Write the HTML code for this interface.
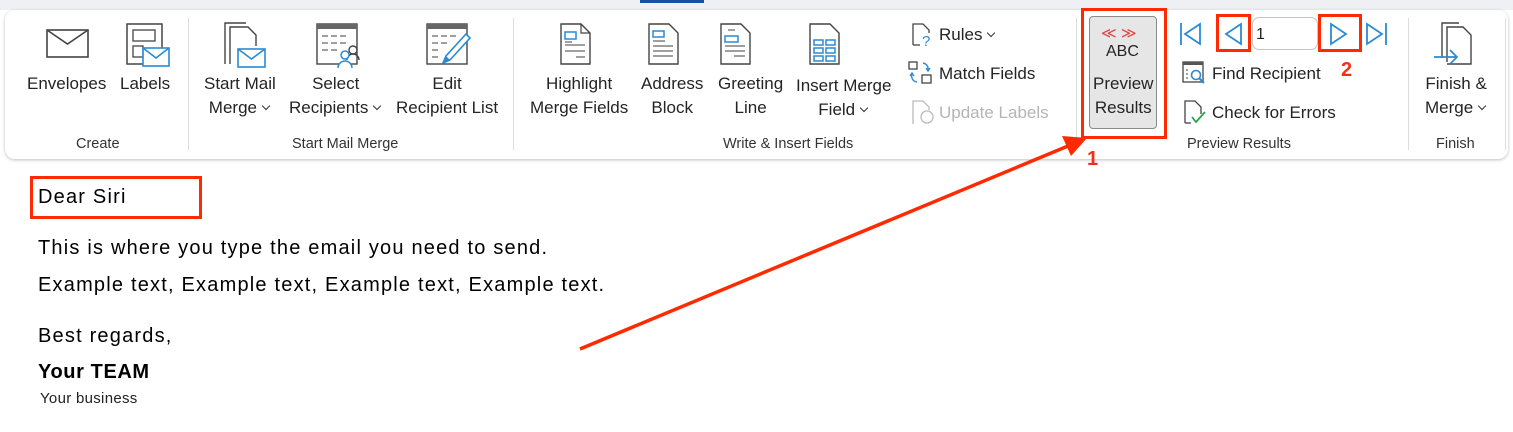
<!DOCTYPE html>
<html><head><meta charset="utf-8"><style>
*{margin:0;padding:0;box-sizing:border-box}
body{width:1513px;height:432px;background:#fff;position:relative;overflow:hidden;font-family:"Liberation Sans",sans-serif;color:#242424}
.t{position:absolute;font-size:17px;white-space:nowrap;line-height:24px;text-align:center}
.g{position:absolute;font-size:14.5px;white-space:nowrap;color:#333}
.sep{position:absolute;top:18px;width:1px;height:132px;background:#dcdcdc}
svg{position:absolute;overflow:visible}
.d{position:absolute;left:38px;font-size:20px;white-space:nowrap;color:#000;letter-spacing:1.2px}
.rb{position:absolute;border:3px solid #ff2a00}
.cv{display:inline-block;width:6px;height:6px;border-right:1.5px solid #333;border-bottom:1.5px solid #333;transform:rotate(45deg);margin:0 2px 5px 6px;vertical-align:middle}
</style></head><body>
<div style="position:absolute;left:0;top:0;width:1513px;height:10px;background:#eef0f4"></div>
<div style="position:absolute;left:640px;top:0;width:64px;height:3px;background:#1a4fa8"></div>
<div style="position:absolute;left:5px;top:10px;width:1503px;height:149px;background:#fff;border-radius:10px;box-shadow:0 1px 3px rgba(0,0,0,.25)"></div>

<!-- Create -->
<svg style="left:46px;top:29px" width="44" height="30"><rect x="1" y="1" width="41" height="27" fill="none" stroke="#444" stroke-width="1.6"/><path d="M1 1 L21.5 15 L42 1" fill="none" stroke="#444" stroke-width="1.6"/></svg>
<svg style="left:126px;top:23px" width="46" height="46"><rect x="1" y="1" width="35" height="40" fill="none" stroke="#444" stroke-width="1.5"/><rect x="7" y="7" width="22" height="11" fill="none" stroke="#444" stroke-width="1.3"/><rect x="7" y="23" width="10" height="11" fill="none" stroke="#444" stroke-width="1.3"/><rect x="17" y="25" width="26" height="18" fill="#fff" stroke="#2a8ad4" stroke-width="1.6"/><path d="M17 25 L30 35 L43 25" fill="none" stroke="#2a8ad4" stroke-width="1.6"/></svg>
<div class="t" style="left:27px;top:72px">Envelopes</div>
<div class="t" style="left:120px;top:72px">Labels</div>
<div class="g" style="left:76px;top:136px">Create</div>
<div class="sep" style="left:188px"></div>

<!-- Start Mail Merge -->
<svg style="left:224px;top:22px" width="46" height="46"><path d="M1 42 V1 H22" fill="none" stroke="#444" stroke-width="1.4"/><path d="M6 42 V5 H24 L32 13 V24" fill="#fff" stroke="#444" stroke-width="1.4"/><rect x="14" y="27" width="27" height="18" fill="#fff" stroke="#2a8ad4" stroke-width="1.6"/><path d="M14 27 L27.5 37 L41 27" fill="none" stroke="#2a8ad4" stroke-width="1.6"/></svg>
<svg style="left:316px;top:23px" width="46" height="46"><rect x="1" y="1" width="40" height="40" fill="#fff" stroke="#444" stroke-width="1.4"/><rect x="1" y="1" width="40" height="5" fill="#666"/><path d="M6 13h6M15 13h6M24 13h6M6 20h6M15 20h6M24 20h6M6 27h6M15 27h6" stroke="#666" stroke-width="1.3"/><circle cx="37" cy="27" r="4" fill="#fff" stroke="#444" stroke-width="1.4"/><path d="M31 37 a6 6 0 0 1 12 0" fill="none" stroke="#444" stroke-width="1.4"/><circle cx="29" cy="32" r="4" fill="#fff" stroke="#2a8ad4" stroke-width="1.5"/><path d="M22 45 a7 7 0 0 1 14 0" fill="#fff" stroke="#2a8ad4" stroke-width="1.5"/></svg>
<svg style="left:426px;top:23px" width="46" height="46"><rect x="1" y="1" width="40" height="40" fill="#fff" stroke="#444" stroke-width="1.4"/><rect x="1" y="1" width="40" height="5" fill="#666"/><path d="M6 13h6M15 13h6M24 13h6M6 20h6M15 20h6M6 27h6M6 34h6" stroke="#666" stroke-width="1.3"/><path d="M40 11 L44 15 L24 37 L17 40 L20 33 Z" fill="#fff" stroke="#2a8ad4" stroke-width="1.6"/><path d="M17 40 L20 33 L24 37Z" fill="#2a8ad4"/></svg>
<div class="t" style="left:204px;top:72px">Start Mail<br>Merge<span class="cv"></span></div>
<div class="t" style="left:289px;top:72px">Select<br>Recipients<span class="cv"></span></div>
<div class="t" style="left:396px;top:72px">Edit<br>Recipient List</div>
<div class="g" style="left:292px;top:136px">Start Mail Merge</div>
<div class="sep" style="left:513px"></div>

<!-- Write & Insert -->
<svg style="left:560px;top:23px" width="32" height="42"><path d="M1 41 V1 H21 L30 10 V41 Z" fill="#fff" stroke="#444" stroke-width="1.4"/><path d="M21 1 V10 H30" fill="none" stroke="#444" stroke-width="1.2"/><rect x="5" y="9" width="11" height="7" fill="none" stroke="#2a8ad4" stroke-width="1.5"/><path d="M5 22h20M5 28h20M16 34h9M5 19h7" stroke="#666" stroke-width="1.2"/></svg>
<svg style="left:648px;top:23px" width="32" height="42"><path d="M1 41 V1 H21 L30 10 V41 Z" fill="#fff" stroke="#444" stroke-width="1.4"/><rect x="5" y="8" width="11" height="6" fill="none" stroke="#2a8ad4" stroke-width="1.5"/><path d="M5 18h12M5 23h20M5 28h20M5 33h20" stroke="#666" stroke-width="1.2"/></svg>
<svg style="left:720px;top:23px" width="32" height="42"><path d="M1 41 V1 H21 L30 10 V41 Z" fill="#fff" stroke="#444" stroke-width="1.4"/><path d="M8 7h7" stroke="#666" stroke-width="1.2"/><rect x="5" y="13" width="13" height="6" fill="none" stroke="#2a8ad4" stroke-width="1.5"/><path d="M5 23h20M5 28h20M14 33h11" stroke="#666" stroke-width="1.2"/></svg>
<svg style="left:809px;top:23px" width="32" height="42"><path d="M1 41 V1 H21 L30 10 V41 Z" fill="#fff" stroke="#444" stroke-width="1.4"/><g fill="none" stroke="#2a8ad4" stroke-width="1.5"><rect x="5" y="17" width="9" height="5"/><rect x="17" y="17" width="9" height="5"/><rect x="5" y="25" width="9" height="5"/><rect x="17" y="25" width="9" height="5"/><rect x="5" y="33" width="9" height="5"/><rect x="17" y="33" width="9" height="5"/></g></svg>
<div class="t" style="left:530px;top:72px">Highlight<br>Merge Fields</div>
<div class="t" style="left:641px;top:72px">Address<br>Block</div>
<div class="t" style="left:718px;top:72px">Greeting<br>Line</div>
<div class="t" style="left:796px;top:74px">Insert Merge<br>Field<span class="cv"></span></div>
<svg style="left:912px;top:23px" width="22" height="24"><path d="M1 22 V1 H11 L17 7 V10" fill="none" stroke="#444" stroke-width="1.3"/><path d="M1 22 H8" stroke="#444" stroke-width="1.3"/><text x="10" y="23" font-size="15" fill="#2a8ad4" font-family="Liberation Sans">?</text></svg>
<div class="t" style="left:939px;top:23px">Rules<span class="cv"></span></div>
<svg style="left:908px;top:61px" width="24" height="24"><rect x="1" y="1" width="8" height="7" fill="none" stroke="#444" stroke-width="1.3"/><rect x="14" y="14" width="9" height="8" fill="none" stroke="#444" stroke-width="1.3"/><path d="M15 2 a6 6 0 0 1 5 7 M18 7 l2 3 l2-3 M9 21 a6 6 0 0 1 -5-8 M2 15 l2-3 l2 3" fill="none" stroke="#2a8ad4" stroke-width="1.4"/></svg>
<div class="t" style="left:939px;top:62px">Match Fields</div>
<svg style="left:912px;top:100px" width="24" height="26"><path d="M1 24 V1 H11 L17 7 V10" fill="none" stroke="#bbb" stroke-width="1.3"/><circle cx="15" cy="17" r="6" fill="none" stroke="#bbb" stroke-width="1.3"/></svg>
<div class="t" style="left:939px;top:101px;color:#b5b5b5">Update Labels</div>
<div class="g" style="left:723px;top:136px">Write &amp; Insert Fields</div>
<div class="sep" style="left:1076px"></div>

<!-- Preview Results -->
<div style="position:absolute;left:1089px;top:16px;width:68px;height:113px;background:#e6e6e6;border:1px solid #8a8a8a;border-radius:4px"></div>
<div class="t" style="left:1101px;top:22px;color:#e84040;font-size:15px">≪ ≫</div>
<div class="t" style="left:1106px;top:40px;font-size:16px">ABC</div>
<div class="t" style="left:1093px;top:72px">Preview<br>Results</div>
<div class="rb" style="left:1081px;top:8px;width:86px;height:131px"></div>
<svg style="left:1180px;top:23px" width="210" height="24" fill="none" stroke="#2a8ad4" stroke-width="1.8"><path d="M1 0 V22"/><path d="M20 1 L5 11 L20 21 Z"/><path d="M61 1 L46 11 L61 21 Z"/><path d="M151 1 L166 11 L151 21 Z"/><path d="M187 1 L202 11 L187 21 Z"/><path d="M206 0 V22"/></svg>
<div style="position:absolute;left:1252px;top:17px;width:66px;height:33px;border:1px solid #c5c5c5;border-radius:7px;background:#fff"></div>
<div class="t" style="left:1256px;top:23px;font-size:16px">1</div>
<div class="rb" style="left:1216px;top:14px;width:35px;height:38px"></div>
<div class="rb" style="left:1318px;top:14px;width:44px;height:38px"></div>
<div style="position:absolute;left:1341px;top:59px;color:#f0301c;font-weight:bold;font-size:20px">2</div>
<svg style="left:1182px;top:61px" width="26" height="26"><rect x="1" y="1" width="20" height="20" fill="#fff" stroke="#444" stroke-width="1.3"/><rect x="1" y="1" width="20" height="3" fill="#555"/><path d="M4 9h2M4 13h2M4 17h2" stroke="#444"/><circle cx="14" cy="14" r="4.5" fill="none" stroke="#2a8ad4" stroke-width="1.6"/><path d="M17 17 L22 22" stroke="#2a8ad4" stroke-width="2"/></svg>
<div class="t" style="left:1212px;top:62px">Find Recipient</div>
<svg style="left:1184px;top:100px" width="26" height="26"><path d="M1 23 V1 H11 L17 7 V14" fill="none" stroke="#444" stroke-width="1.3"/><path d="M1 23 H7" stroke="#444" stroke-width="1.3"/><path d="M8 17 L12 22 L21 12" fill="none" stroke="#2aa44a" stroke-width="1.8"/></svg>
<div class="t" style="left:1212px;top:101px">Check for Errors</div>
<div class="g" style="left:1187px;top:136px">Preview Results</div>
<div class="sep" style="left:1408px"></div>

<!-- Finish -->
<svg style="left:1433px;top:22px" width="40" height="44"><path d="M9 36 V1 H26" fill="none" stroke="#444" stroke-width="1.4"/><path d="M14 40 V5 H30 L38 13 V42 H14" fill="#fff" stroke="#444" stroke-width="1.4"/><path d="M1 35 H24 M17 28 L24 35 L17 42" fill="none" stroke="#2a8ad4" stroke-width="1.7"/></svg>
<div class="t" style="left:1425px;top:72px">Finish &amp;<br>Merge<span class="cv"></span></div>
<div class="g" style="left:1436px;top:136px">Finish</div>
<div class="sep" style="left:1505px"></div>

<!-- Arrow -->
<svg style="left:0;top:0" width="1513" height="432"><line x1="580" y1="349" x2="1068" y2="146" stroke="#ff2a00" stroke-width="3.5"/><path d="M1087 138 L1062 136 L1071 156 Z" fill="#ff2a00"/></svg>
<div style="position:absolute;left:1087px;top:148px;color:#f0301c;font-weight:bold;font-size:20px">1</div>

<!-- Document -->
<div class="rb" style="left:30px;top:176px;width:172px;height:43px"></div>
<div class="d" style="top:186px">Dear Siri</div>
<div class="d" style="top:237px">This is where you type the email you need to send.</div>
<div class="d" style="top:274px">Example text, Example text, Example text, Example text.</div>
<div class="d" style="top:325px">Best regards,</div>
<div class="d" style="top:361px;font-weight:bold;letter-spacing:0.6px">Your TEAM</div>
<div class="d" style="top:390px;left:40px;font-size:15px;color:#222;letter-spacing:0.3px">Your business</div>
</body></html>
